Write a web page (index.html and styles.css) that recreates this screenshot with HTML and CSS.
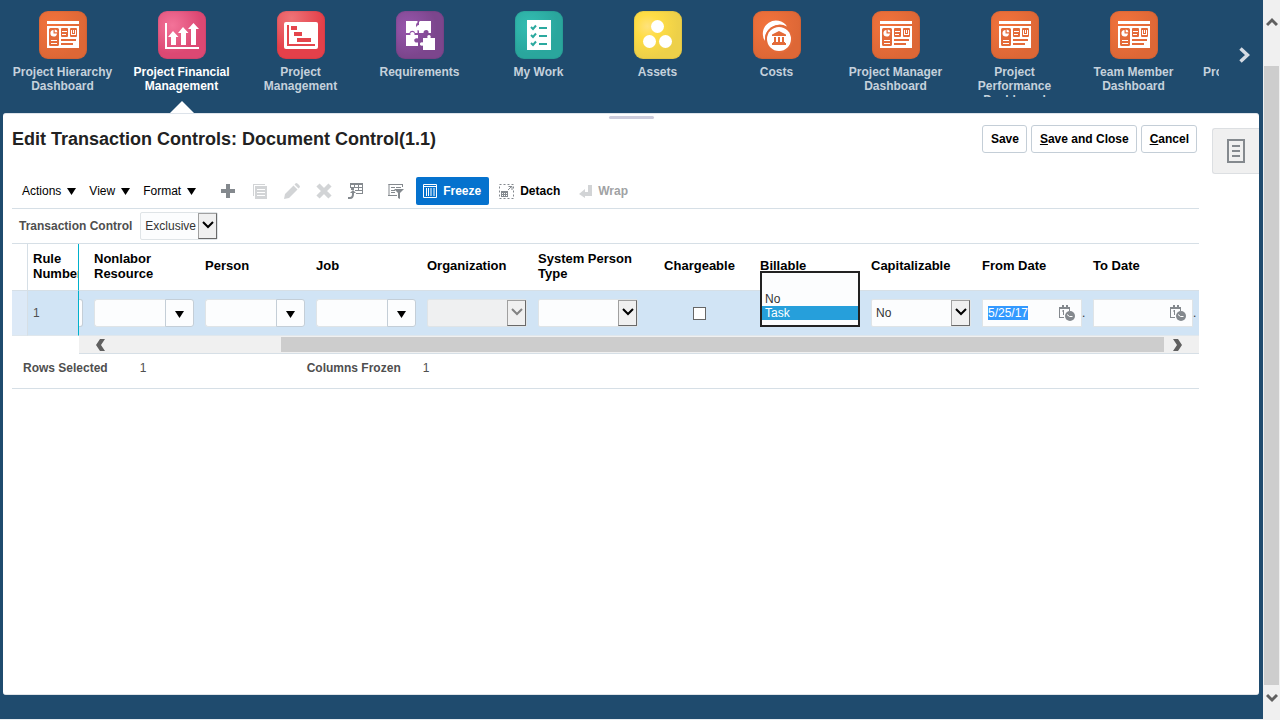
FILE: index.html
```html
<!DOCTYPE html>
<html lang="en">
<head>
<meta charset="utf-8">
<meta name="viewport" content="width=device-width, initial-scale=1">
<title>Edit Transaction Controls</title>
<link rel="stylesheet" href="styles.css">
</head>
<body>
<svg class="defs" aria-hidden="true">
  <symbol id="i-dash" viewBox="0 0 48 48">
    <path d="M8 10h32v3H8zM8 15h32v22H8z" fill="#fff"/>
    <path class="cut" d="M11.500 17h7a1.500 1.500 0 0 1 1.500 1.500v15a1.500 1.500 0 0 1-1.500 1.500h-7a1.500 1.500 0 0 1-1.500-1.500v-15a1.500 1.500 0 0 1 1.500-1.500zM23 17h5a1 1 0 0 1 1 1v7a1 1 0 0 1-1 1h-5a1 1 0 0 1-1-1v-7a1 1 0 0 1 1-1zM32 17h5a1 1 0 0 1 1 1v7a1 1 0 0 1-1 1h-5a1 1 0 0 1-1-1v-7a1 1 0 0 1 1-1zM22 28h15v2H22zM22 32h12v2H22z"/>
    <path d="M14.500 19v3.500H18a3.300 3.300 0 1 1-3.500-3.500zM15.700 18.500a3 3 0 0 1 2.800 2.800h-2.800zM12 29h6v1h-6zM12 32h6v1h-6zM23 20h5v1h-5zM23 23h4v1h-4zM32 19h1v4h3v-4h1v5h-5zM34 19h1v3h-1z" fill="#fff"/>
  </symbol>
  <symbol id="i-down" viewBox="0 0 12 8"><path d="M1 1l5 5 5-5" fill="none" stroke="currentColor" stroke-width="2"/></symbol>
  <symbol id="i-tri" viewBox="0 0 9 7"><path d="M0 0h9L4.500 7z" fill="currentColor"/></symbol>
  <symbol id="i-prev" viewBox="0 0 10 12"><path d="M4 0h5L5 6l4 6H4L0 6z" fill="#606060"/></symbol>
  <symbol id="i-cal" viewBox="0 0 16 16">
    <path d="M0 2h3V0h2v2h2V0h2v2h2v4h-1V4H1v8h4v1H0z" fill="#84898e"/>
    <path d="M3 6l1-1h1v5H4V6.500H3z" fill="#84898e"/>
    <circle cx="11" cy="11" r="5" fill="#84898e"/><path d="M8 9.500l2.500 2h3" fill="none" stroke="#fff"/>
  </symbol>
</svg>

<div class="app">
  <nav class="springboard">
    <ul class="tiles">
      <li><a href="#"><svg class="tile orange"><use href="#i-dash"/></svg><span>Project Hierarchy Dashboard</span></a></li>
      <li class="active"><a href="#" aria-current="page"><svg class="tile pink" viewBox="0 0 48 48"><path d="M7 12h2v24h32v2H7z" fill="#fff"/><path d="M15 20l5.500 6H18v8h-5v-8h-3zM25 16l5.500 6H28v12h-5V22h-3zM35.500 12l5.500 6h-3v16h-5V18h-3z" fill="#fff"/></svg><span>Project Financial Management</span></a></li>
      <li><a href="#"><svg class="tile red" viewBox="0 0 48 48"><rect x="7" y="11" width="34" height="27" rx="2" fill="#fff"/><path d="M10 14h2v19h26v2H10zM14 15h6v4h-6zM17 21h8v4h-8zM20 27h14v4H20z" fill="#e4454c"/></svg><span>Project Management</span></a></li>
      <li><a href="#"><svg class="tile purple" viewBox="0 0 48 48"><path d="M10 10h11.500v1.500c-2 1-2 5 0 6.500V22h-2.500c-.5-3-5-3-5.500 0H10zM24 10h11v12h-2.500c1-4-5.500-4-5 0H23v-2.500c-3.500-.5-3.500-5 0-5.500V11zM10 24h4.500c-1.500-4 5-4 4 0H22v3.500c-5-1.500-5 5 0 4V35H10zM27 27h4.500c-1.500-4 4.500-4 3 0H39v12H27v-4.500c-4 1.500-4-4.500 0-3z" fill="#fff"/></svg><span>Requirements</span></a></li>
      <li><a href="#"><svg class="tile teal" viewBox="0 0 48 48"><path d="M12 9h24v30H12z" fill="#fff"/><path d="M16 16l2 2 3-3.500M16 24l2 2 3-3.500M16 32l2 2 3-3.500M24 17h8M24 25h8M24 33h8" fill="none" stroke="#2ba99f" stroke-width="2"/></svg><span>My Work</span></a></li>
      <li><a href="#"><svg class="tile yellow" viewBox="0 0 48 48"><g fill="#fff"><circle cx="23.500" cy="15.500" r="6.500"/><circle cx="15.500" cy="30.500" r="6.500"/><circle cx="31.500" cy="30.500" r="6.500"/></g></svg><span>Assets</span></a></li>
      <li><a href="#"><svg class="tile orange" viewBox="0 0 48 48"><path d="M34 15.500A13 13 0 1 0 12 30a15 15 0 0 1 22-14.500z" fill="#fff"/><circle class="cut" cx="26" cy="28" r="14"/><circle cx="26" cy="28" r="12" fill="#fff"/><path class="cut" d="M26 20l7 3.500V25H19v-1.500zM21 26h2v5h-2zM25 26h2v5h-2zM29 26h2v5h-2zM20 31h12v1h1v2H19v-2h1z"/></svg><span>Costs</span></a></li>
      <li><a href="#"><svg class="tile orange"><use href="#i-dash"/></svg><span>Project Manager Dashboard</span></a></li>
      <li><a href="#"><svg class="tile orange"><use href="#i-dash"/></svg><span>Project Performance Dashboard</span></a></li>
      <li><a href="#"><svg class="tile orange"><use href="#i-dash"/></svg><span>Team Member Dashboard</span></a></li>
      <li class="overflowing"><a href="#"><span>Pro</span></a></li>
    </ul>
    <button class="next" type="button" aria-label="Next"><svg viewBox="0 0 11 16" width="11" height="16"><path d="M1.500 1.500L8.500 8l-7 6.500" fill="none" stroke="#d5dbe3" stroke-width="3.500"/></svg></button>
  </nav>

  <div class="panel">
    <div class="grip"></div>
    <div class="columns">
      <main>
        <header class="title-row">
          <h1>Edit Transaction Controls: Document Control(1.1)</h1>
          <div class="actions">
            <button type="button">Save</button>
            <button type="button"><u>S</u>ave and Close</button>
            <button type="button"><u>C</u>ancel</button>
          </div>
        </header>

        <div class="toolbar">
          <div class="menus">
            <button type="button">Actions<svg class="tri"><use href="#i-tri"/></svg></button>
            <button type="button">View<svg class="tri"><use href="#i-tri"/></svg></button>
            <button type="button">Format<svg class="tri"><use href="#i-tri"/></svg></button>
          </div>
          <div class="icons">
            <button type="button" aria-label="Add"><svg viewBox="0 0 16 16"><path d="M6 1h4v5h5v4h-5v5H6v-5H1V6h5z" fill="#84898e"/></svg></button>
            <button type="button" aria-label="Duplicate" disabled><svg viewBox="0 0 16 16"><path d="M1 1h12v1H2v11H1zM3 3h12v13H3z" fill="#d2d4d6"/><path d="M5 6.500h8M5 9.500h8M5 12.500h8" stroke="#fff"/></svg></button>
            <button type="button" aria-label="Edit" disabled><svg viewBox="0 0 16 16"><path d="M0 16l1-5 8.500-8.500 4 4L5 15zM10.500 1.500L12 0q1 0 2 1l1 1q1 1 1 2l-1.500 1.500z" fill="#d2d4d6"/></svg></button>
            <button type="button" aria-label="Delete" disabled><svg viewBox="0 0 16 16"><path d="M2 2l12 12M14 2L2 14" stroke="#d2d4d6" stroke-width="4.500"/></svg></button>
            <button type="button" aria-label="Export"><svg viewBox="0 0 16 16"><path d="M2 0h13v11H8v-1h6V8H7V7h1V5H6v2H3V5H2z" fill="#84898e"/><path d="M3 2h3v2H3zM7 2h3v2H7zM11 2h3v2h-3zM7 5h3v2H7zM11 5h3v2h-3zM7 8h3v2H7zM11 8h3v2h-3z" fill="#fff"/><path d="M0 15h2q3 0 3-4V9" fill="none" stroke="#84898e" stroke-width="2"/><path d="M2 10l3-3 3 3z" fill="#84898e"/></svg></button>
          </div>
          <div class="icons filter">
            <button type="button" aria-label="Query by Example"><svg viewBox="0 0 16 16"><path d="M.500 1.500h14M1 1v11M14.500 1v3M3 4.500h4M8 4.500h5M3 7.500h4M3 9.500h4M0 12.500h9" fill="none" stroke="#84898e"/><path d="M6 6h10l-4 4v6l-2-1v-5z" fill="#84898e"/></svg></button>
          </div>
          <button class="tool freeze" type="button" aria-pressed="true"><svg viewBox="0 0 14 14" width="14" height="14"><path d="M.500.500h13v13H.500zM1 2.500h12M3.500 4v8M5.500 4v8M8 4v8M11 4v8" fill="none" stroke="#fff"/></svg>Freeze</button>
          <button class="tool detach" type="button"><svg viewBox="0 0 15 15" width="15" height="15"><path d="M.500.500h14v14H.500z" fill="none" stroke="#84898e" stroke-dasharray="2 2"/><path d="M2 7h7v6H2z" fill="#84898e"/><path d="M3 9h1v1H3zM5 9h1v1H5zM7 9h1v1H7zM3 11h1v1H3zM5 11h1v1H5zM7 11h1v1H7z" fill="#fff"/><path d="M9 6l3-3M9.500 2.500H13V6" fill="none" stroke="#84898e"/></svg>Detach</button>
          <button class="tool wrap" type="button" disabled><svg viewBox="0 0 13 13" width="13" height="13"><path d="M9 0h4v11H6v2L0 9l6-5v3h3z" fill="#d2d4d6"/></svg>Wrap</button>
        </div>

        <div class="filter-row">
          <label for="tc">Transaction Control</label>
          <span class="pick fit"><select id="tc"><option>Exclusive</option><option>Inclusive</option></select><i><svg><use href="#i-down"/></svg></i></span>
        </div>

        <table class="grid">
          <colgroup><col class="c-head"><col class="c-rule"><col class="c-cut"><col span="10"></colgroup>
          <thead>
            <tr>
              <td></td><th class="rule" scope="col">Rule Number</th><td></td>
              <th scope="col">Nonlabor Resource</th><th scope="col">Person</th><th scope="col">Job</th><th scope="col">Organization</th><th scope="col">System Person Type</th><th class="mid" scope="col">Chargeable</th><th scope="col">Billable</th><th scope="col">Capitalizable</th><th scope="col">From Date</th><th scope="col">To Date</th>
            </tr>
          </thead>
          <tbody>
            <tr>
              <td class="row-head"></td>
              <td class="rule">1</td>
              <td class="cut-cell"><div></div></td>
              <td><span class="combo"><input type="text" aria-label="Nonlabor Resource"><button type="button" aria-label="Search Nonlabor Resource"><svg class="tri"><use href="#i-tri"/></svg></button></span></td>
              <td><span class="combo"><input type="text" aria-label="Person"><button type="button" aria-label="Search Person"><svg class="tri"><use href="#i-tri"/></svg></button></span></td>
              <td><span class="combo"><input type="text" aria-label="Job"><button type="button" aria-label="Search Job"><svg class="tri"><use href="#i-tri"/></svg></button></span></td>
              <td><span class="pick off"><select aria-label="Organization" disabled><option></option></select><i><svg><use href="#i-down"/></svg></i></span></td>
              <td><span class="pick"><select aria-label="System Person Type"><option></option></select><i><svg><use href="#i-down"/></svg></i></span></td>
              <td class="mid"><input class="check" type="checkbox" aria-label="Chargeable"></td>
              <td class="anchor"><select class="open-list" size="3" aria-label="Billable"><option></option><option>No</option><option selected>Task</option></select></td>
              <td><span class="pick"><select aria-label="Capitalizable"><option>No</option></select><i><svg><use href="#i-down"/></svg></i></span></td>
              <td><div class="date-cell"><span class="date"><input id="from" type="text" value="5/25/17" aria-label="From Date"><button type="button" aria-label="Select From Date"><svg><use href="#i-cal"/></svg></button></span><span>.</span></div></td>
              <td><div class="date-cell"><span class="date"><input type="text" aria-label="To Date"><button type="button" aria-label="Select To Date"><svg><use href="#i-cal"/></svg></button></span><span>.</span></div></td>
            </tr>
          </tbody>
        </table>
        <div class="hscroll">
          <svg><use href="#i-prev"/></svg><div class="thumb"></div><svg class="flip"><use href="#i-prev"/></svg>
        </div>
        <dl class="status">
          <dt>Rows Selected</dt><dd>1</dd><dt>Columns Frozen</dt><dd>1</dd>
        </dl>
      </main>
      <aside>
        <button type="button" aria-label="Tasks"><svg viewBox="0 0 18 24" width="18" height="24"><path d="M1 1h16v22H1zM5 7h8M5 12h8M5 17h8" fill="none" stroke="#84898e" stroke-width="2"/></svg></button>
      </aside>
    </div>
  </div>
</div>

<div class="vscroll" aria-hidden="true">
  <svg viewBox="0 0 12 10"><path d="M1 8l5-5 5 5" fill="none" stroke="#606060" stroke-width="3"/></svg>
  <div class="thumb"></div>
  <svg viewBox="0 0 12 10"><path d="M1 2l5 5 5-5" fill="none" stroke="#606060" stroke-width="3"/></svg>
</div>
<script src="page.js"></script>
</body>
</html>
```
FILE: styles.css
```css
* { box-sizing: border-box; }
body {
  margin: 0;
  display: flex;
  min-height: 100vh;
  font: 12px/14px "Liberation Sans", Arial, sans-serif;
  color: #333;
  background: #1f4b6e;
}
button, input, select { font: inherit; color: inherit; margin: 0; border-radius: 0; }
button { background: none; border: 0; padding: 0; cursor: pointer; }
input, select { outline: 0; }
svg { display: block; flex: none; }
.defs { position: absolute; width: 0; height: 0; }

.app {
  flex: 1;
  min-width: 0;
  display: flex;
  flex-direction: column;
  padding-bottom: 24px;
  border-bottom: 1px solid #e8ecf0;
}

/* springboard */
.springboard { display: flex; height: 113px; padding-left: 3px; }
.tiles { flex: 1; display: flex; margin: 0; padding: 0; list-style: none; overflow: hidden; }
.tiles li { flex: 0 0 119px; position: relative; padding: 11px 6px 0; }
.tiles a {
  display: flex;
  flex-direction: column;
  align-items: center;
  gap: 6px;
  height: 86px;
  overflow: hidden;
  color: #c5d1dc;
  font-weight: bold;
  text-align: center;
  text-decoration: none;
}
.tiles .active a { color: #fff; }
.tiles .active::after {
  content: "";
  position: absolute;
  bottom: 0;
  left: 50%;
  margin-left: -12px;
  border: 12px solid transparent;
  border-top: 0;
  border-bottom-color: #fff;
}
.tiles .overflowing { padding: 65px 0 0 10px; }
.tiles .overflowing a { align-items: flex-start; height: 30px; }
.tile { width: 48px; height: 48px; border-radius: 9px; box-shadow: inset 0 0 1px 1px rgba(0, 0, 0, .06); }
.orange { background-image: radial-gradient(circle at 30% 30%, #f2733c, #dd6736 70%); }
.pink { background-image: radial-gradient(circle at 30% 30%, #f37399, #dc4873 60%); }
.red { background-image: radial-gradient(circle at 30% 15%, #ee7377, #e4404a 60%); }
.purple { background-image: radial-gradient(circle at 25% 35%, #9856ac, #7c468d 60%); }
.teal { background-image: radial-gradient(circle at 30% 30%, #33bdb2, #2aa69d 60%); }
.yellow { background-image: radial-gradient(circle at 28% 32%, #ffe27c, #ffdd45 25%, #edd049 65%); }
.cut { fill: #e46b39; }
.next { width: 44px; padding: 0 0 3px 20px; }

/* content panel */
.panel {
  flex: 1;
  display: flex;
  flex-direction: column;
  margin: 0 4px 0 3px;
  background: #fff;
  border-radius: 3px;
  border-top: 1px solid #dde3ea;
  border-bottom: 1px solid #e0e4e8;
}
.grip { width: 45px; height: 3px; margin: 2px auto 0; border-radius: 2px; background: #ccccdc; }
.columns { flex: 1; display: flex; }
main { flex: 1; min-width: 0; margin: 6px 13px 0 9px; }
.title-row { display: flex; align-items: center; justify-content: space-between; height: 28px; padding-right: 2px; }
h1 { margin: 0; font-size: 18px; line-height: 28px; color: #222; }
.actions { display: flex; gap: 4px; }
.actions button {
  height: 28px;
  padding: 0 7px 0 8px;
  border: 1px solid #c4ced7;
  border-radius: 3px;
  background: #fff;
  color: #000;
  font-weight: bold;
}

.toolbar {
  display: flex;
  align-items: center;
  height: 56px;
  padding: 21px 0 0 10px;
  color: #000;
  border-bottom: 1px solid #d6dfe6;
}
.menus { display: flex; gap: 13px; }
.menus button { display: flex; align-items: center; gap: 6px; }
.tri { width: 9px; height: 7px; }
.icons { display: flex; gap: 16px; margin-left: 24px; }
.icons svg { width: 16px; height: 16px; }
.tool { display: flex; align-items: center; gap: 6px; height: 28px; font-weight: bold; }
.freeze { margin-left: 12px; padding: 0 8px 0 7px; border-radius: 2px; background: #0572ce; color: #fff; }
.detach { margin-left: 10px; }
.wrap { margin-left: 19px; color: #a0a2a4; }

.filter-row {
  display: flex;
  align-items: center;
  gap: 8px;
  height: 35px;
  padding-left: 7px;
  border-bottom: 1px solid #d6dfe6;
}
.filter-row label { color: #4f4f4f; font-weight: bold; }

/* drop-downs */
.pick { display: grid; width: 100px; height: 28px; border: 1px solid #dfe4e7; border-radius: 2px; background: #fcfdfe; }
.pick.fit { width: 78px; }
.pick select, .pick i { grid-area: 1 / 1; }
.pick select { appearance: none; width: 100%; height: 26px; padding: 0 20px 0 4px; border: 0; background: none; }
.pick i {
  justify-self: end;
  display: flex;
  align-items: center;
  justify-content: center;
  width: 19px;
  height: 26px;
  padding-bottom: 2px;
  border: 1px solid;
  border-color: #a0a0a0 #696969 #696969 #a0a0a0;
  background: #f0f0f0;
  color: #000;
  pointer-events: none;
}
.pick i svg { width: 12px; height: 8px; }
.pick.off { background: #eff0f1; }
.pick.off i { color: #838383; }

/* transaction control table */
.grid { width: 100%; table-layout: fixed; border-collapse: separate; border-spacing: 0; }
.c-head { width: 16px; }
.c-rule { width: 51px; }
.c-cut { width: 10px; }
.grid th { padding: 0 5px 3px; color: #000; font-size: 13px; line-height: 15px; text-align: left; }
.grid .mid { text-align: center; }
.grid thead tr { height: 47px; }
.grid thead th, .grid thead td { border-bottom: 1px solid #d6dfe6; }
.grid thead td:first-child, .grid .row-head { border-right: 1px solid #d6dfe6; }
.grid .rule { padding-right: 0; overflow: hidden; border-right: 1px solid #00b0cc; }
.grid tbody tr { height: 45px; }
.grid tbody td { height: 45px; padding: 0 5px; background: #d1e4f5; border-bottom: 1px solid #dfe7ed; }
.grid tbody .row-head { background: #dce9f7; }
.grid tbody .rule { color: #4f4f4f; }
.grid tbody .cut-cell { padding: 0 6px 0 0; }
.cut-cell div { height: 28px; border: 1px solid #c4ced7; border-left: 0; border-radius: 0 3px 3px 0; background: #fcfdfe; }
.combo { display: flex; width: 100px; height: 28px; }
.combo input { flex: 1; min-width: 0; border: 1px solid #dfe4e7; border-right: 0; border-radius: 3px 0 0 3px; background: #fcfdfe; padding: 0 5px; }
.combo button { display: flex; align-items: center; justify-content: center; width: 29px; border: 1px solid #c4ced7; border-radius: 0 3px 3px 0; background: #fcfdfe; color: #000; padding-top: 2px; }
.check { appearance: none; width: 13px; height: 13px; border: 1px solid #666; background: #fff; vertical-align: middle; }
.check:checked { background: #0572ce; }
.grid .anchor { position: relative; }
.open-list {
  position: absolute;
  top: -20px;
  left: 5px;
  width: 100px;
  height: 56px;
  padding: 5px 0;
  border: 2px solid #222;
  background: #fcfdfe;
  overflow: hidden;
}
.open-list option { height: 14px; min-height: 14px; padding: 0 3px; line-height: 14px; }
.open-list option:checked { background: linear-gradient(#269fdb, #269fdb); -webkit-text-fill-color: #fff; }
.date-cell { display: flex; align-items: center; width: 106px; }
.date { display: flex; align-items: center; width: 100px; height: 28px; padding: 0 6px 0 5px; border: 1px solid #dfe4e7; background: #fcfdfe; }
.date input { flex: 1; min-width: 0; padding: 0; border: 0; background: none; }
.date input::selection { background: #3399ff; color: #fff; }
.date svg { width: 16px; height: 16px; }

.hscroll { display: flex; align-items: center; height: 18px; margin-left: 67px; padding: 0 17px; background: #f0f0f0; border-bottom: 1px solid #d6dfe6; }
.hscroll svg { width: 10px; height: 12px; }
.hscroll .thumb { flex: 1; height: 15px; margin: 0 8px 0 175px; background: #cdcdcd; }
.flip { transform: scaleX(-1); }

.status { display: flex; height: 35px; margin: 0; padding: 7px 11px; border-bottom: 1px solid #d6dfe6; color: #4f4f4f; }
.status dt { font-weight: bold; }
.status dd { flex: 0 0 199px; margin: 0; padding-left: 32px; }
.status dd:last-child { padding-left: 22px; }

aside { width: 47px; padding-top: 9px; }
aside button { display: flex; align-items: center; justify-content: center; width: 47px; height: 46px; border: 1px solid #dcdfe2; border-right: 0; border-radius: 3px 0 0 3px; background: #f0f0f0; }

.vscroll { display: flex; flex-direction: column; align-items: center; width: 17px; padding: 17px 0; background: #f0f0f0; }
.vscroll svg { width: 12px; height: 10px; }
.vscroll .thumb { flex: 1; width: 15px; margin: 39px 0 8px; background: #cdcdcd; }
```
FILE: page.js
```js
const from = document.getElementById("from");
from.focus();
from.select();
```
